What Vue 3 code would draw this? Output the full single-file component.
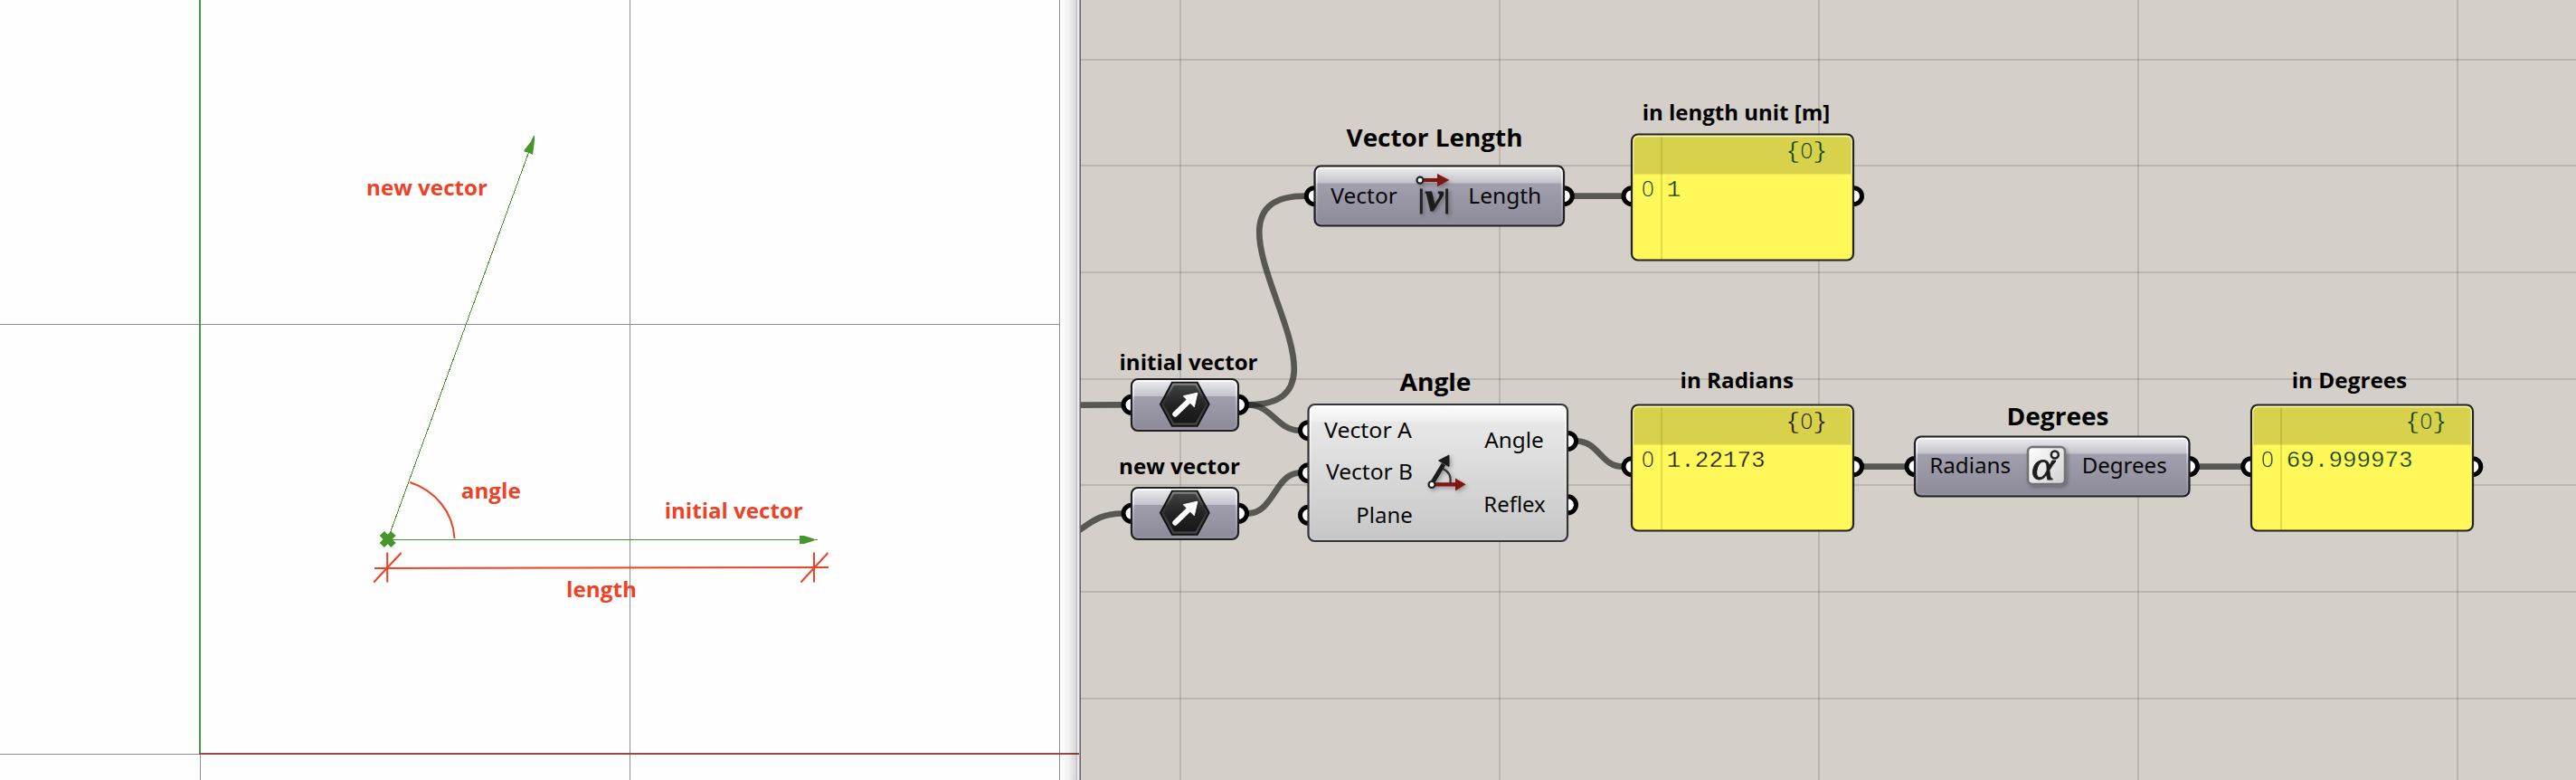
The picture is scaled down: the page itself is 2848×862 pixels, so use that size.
<script setup>
const gridX = [1304, 1657, 2010, 2363, 2716]
const gridY = [65, 182, 300, 418, 535, 653, 771]

const nodes = [
  { x: 1250, y: 418, w: 120, h: 59, kind: 'violet' },
  { x: 1250, y: 538, w: 120, h: 59, kind: 'violet' },
  { x: 1452.5, y: 182.5, w: 277.5, h: 68, kind: 'violet' },
  { x: 1445.5, y: 446, w: 288.5, h: 153, kind: 'silver' },
  { x: 2116, y: 481.5, w: 305.5, h: 68, kind: 'violet' },
]

const panels = [
  { x: 1803, y: 147.5, value: '1', tint: '#063a04' },
  { x: 1803, y: 446.5, value: '1.22173', tint: '#141400' },
  { x: 2488, y: 446.5, value: '69.999973', tint: '#063a04' },
]

const ports = [
  [1251, 447.3], [1369.5, 447.3], [1251, 567.3], [1369.5, 567.3],
  [1453.3, 216.7], [1729.3, 216.7],
  [1446.5, 475.7], [1446.5, 522.7], [1446.5, 569.3], [1733.5, 487.4], [1733.5, 557.8],
  [1804, 216.7], [2049.5, 216.7], [1804, 515.7], [2049.5, 515.7],
  [2117, 515.5], [2420.5, 515.5], [2488.7, 515.7], [2733.8, 515.7],
]

const wires = [
  'M1195 447.7 L1241 447.3',
  'M1180 594 C1203 582 1210 567.8 1241 567.5',
  'M1380 447.3 C1406 447.3 1412 475.7 1437 475.7',
  'M1380 567.3 C1408 567.3 1410 522.7 1437 522.7',
  'M1380 447.3 C1525 447.3 1298 216.7 1443 216.7',
  'M1740 216.7 L1794 216.7',
  'M1743 487.4 C1768 488 1770 515.7 1794 515.7',
  'M2060 515.7 L2107 515.7',
  'M2431 515.6 L2479 515.6',
]

const titles = [
  { t: 'Vector Length', x: 1488.5, y: 161.7, w: 195, s: 27 },
  { t: 'Angle', x: 1547.5, y: 431.7, w: 79, s: 27 },
  { t: 'Degrees', x: 2218.5, y: 470, w: 113, s: 27 },
  { t: 'in length unit [m]', x: 1815.7, y: 133.3, w: 207.5, s: 23.5 },
  { t: 'initial vector', x: 1237.5, y: 409.3, w: 153, s: 23.5 },
  { t: 'new vector', x: 1237, y: 524.3, w: 134, s: 23.5 },
  { t: 'in Radians', x: 1857.5, y: 429.3, w: 125.5, s: 23.5 },
  { t: 'in Degrees', x: 2533.7, y: 429.3, w: 127.5, s: 23.5 },
]

const notes = [
  { t: 'new vector', x: 405, y: 216.3, w: 134 },
  { t: 'angle', x: 509.8, y: 551.3, w: 66 },
  { t: 'initial vector', x: 734.7, y: 573.3, w: 153 },
  { t: 'length', x: 626, y: 659.5, w: 78 },
]

const labels = [
  { t: 'Vector', x: 1471.3, y: 224.7, w: 73.5 },
  { t: 'Length', x: 1623.3, y: 224.7, w: 81 },
  { t: 'Vector A', x: 1464, y: 483.7, w: 97 },
  { t: 'Vector B', x: 1466, y: 530, w: 96 },
  { t: 'Plane', x: 1499.3, y: 577.5, w: 62.5 },
  { t: 'Angle', x: 1641.2, y: 495.4, w: 65.5 },
  { t: 'Reflex', x: 1640.3, y: 565.7, w: 68.5 },
  { t: 'Radians', x: 2133.2, y: 523.3, w: 90 },
  { t: 'Degrees', x: 2301.7, y: 523.3, w: 94 },
]
</script>

<template>
  <svg class="scene" width="2848" height="862" viewBox="0 0 2848 862">
    <defs>
      <linearGradient id="edge" x1="0" x2="1" y1="0" y2="0">
        <stop offset="0" stop-color="#000" stop-opacity="0" />
        <stop offset=".5" stop-color="#000" stop-opacity=".05" />
        <stop offset="1" stop-color="#000" stop-opacity=".18" />
      </linearGradient>
      <linearGradient id="violet" x1="0" x2="0" y1="0" y2="1">
        <stop offset="0" stop-color="#a5a3b1" />
        <stop offset=".35" stop-color="#a09eac" />
        <stop offset="1" stop-color="#8c8a98" />
      </linearGradient>
      <linearGradient id="silver" x1="0" x2="0" y1="0" y2="1">
        <stop offset="0" stop-color="#ededed" />
        <stop offset="1" stop-color="#c6c6c6" />
      </linearGradient>
      <linearGradient id="violet-top" x1="0" x2="0" y1="0" y2="1">
        <stop offset="0" stop-color="#efeff2" />
        <stop offset="1" stop-color="#c3c2cb" />
      </linearGradient>
      <linearGradient id="silver-top" x1="0" x2="0" y1="0" y2="1">
        <stop offset="0" stop-color="#fdfdfd" />
        <stop offset="1" stop-color="#efefef" />
      </linearGradient>
      <linearGradient id="rim" x1="0" x2="0" y1="0" y2="1">
        <stop offset="0" stop-color="#fff" />
        <stop offset=".45" stop-color="#fff" stop-opacity=".3" />
        <stop offset="1" stop-color="#fff" stop-opacity=".08" />
      </linearGradient>
      <linearGradient id="hex" x1="0" x2="0" y1="0" y2="1">
        <stop offset="0" stop-color="#444" />
        <stop offset=".5" stop-color="#242424" />
        <stop offset="1" stop-color="#151515" />
      </linearGradient>
      <linearGradient id="hex-rim" x1="0" x2="0" y1="0" y2="1">
        <stop offset="0" stop-color="#858585" />
        <stop offset=".35" stop-color="#303030" />
        <stop offset="1" stop-color="#484848" />
      </linearGradient>
      <linearGradient id="tile" x1="0" x2="1" y1="0" y2="1">
        <stop offset="0" stop-color="#fff" />
        <stop offset="1" stop-color="#d0d0d0" />
      </linearGradient>
      <filter id="drop" x="-30%" y="-30%" width="170%" height="170%">
        <feDropShadow dx="2" dy="2" stdDeviation="2" flood-opacity=".3" />
      </filter>
      <clipPath id="canvas"><rect x="1195" width="1653" height="862" /></clipPath>
    </defs>

    <!-- viewport -->
    <g shape-rendering="crispEdges">
      <rect width="1195" height="862" fill="#fefefe" />
      <g fill="#8b8f9a">
        <rect y="358" width="1172" height="1" />
        <rect x="696" width="1" height="862" />
        <rect x="1171" width="1" height="862" />
        <rect x="221" y="833" width="1" height="29" />
        <rect y="833" width="221" height="1" />
      </g>
      <rect x="220" width="2" height="833" fill="#489847" />
      <rect x="1190" width="1" height="862" fill="#e4e4e4" />
      <rect x="1191" width="2" height="862" fill="#ebebeb" />
      <rect x="220" y="832" width="973" height="2" fill="#984847" />
      <rect x="1172" width="19" height="862" fill="url(#edge)" />
    </g>

    <g class="vectors">
      <path d="M430 596.5 H904" shape-rendering="crispEdges" />
      <path d="M430 592.500 L585 167" shape-rendering="crispEdges" />
      <path class="solid" d="M884 592 h5 l11 3.500 v2 l-11 3.500 h-5z" />
      <path class="solid" d="M590 150 h1 v5.500 l-2 15.500 -4 -2 -5.500 -1.500 v-1.500 l7 -9z" />
      <path class="cross" d="M422.300 589.500 L435 602.500 M435 589.500 L422.300 602.500" />
    </g>

    <g class="measure">
      <path d="M453.200 533 C481 542 501 566 502.500 595" />
      <path d="M414 628 L916 627" />
      <path d="M428.200 610.500 V643.500 M900 610.500 V643.500" />
      <path d="M443.600 611 L413.200 643.500 M915.400 611 L885.400 643.500" />
    </g>
    <text
      v-for="n in notes" :key="n.t" class="note" :x="n.x" :y="n.y"
      :textLength="n.w" lengthAdjust="spacingAndGlyphs"
    >{{ n.t }}</text>

    <!-- node canvas -->
    <g shape-rendering="crispEdges">
      <rect x="1195" width="1653" height="862" fill="#d4cfc8" />
      <g class="grid">
        <rect v-for="x in gridX" :key="'x' + x" :x="x" y="0" width="2" height="862" />
        <rect v-for="y in gridY" :key="'y' + y" x="1195" :y="y" width="1653" height="2" />
      </g>
      <rect x="1193" width="1" height="862" fill="#a0a0a0" />
      <rect x="1194" width="1" height="862" fill="#65656a" />
    </g>
    <g clip-path="url(#canvas)">
      <path v-for="w in wires" :key="w" :d="w" class="wire" />
    </g>
    <circle v-for="(p, i) in ports" :key="i" class="port" :cx="p[0]" :cy="p[1]" r="9" />

    <g v-for="(n, i) in nodes" :key="'n' + i">
      <rect :x="n.x + 1" :y="n.y + 1" :width="n.w - 2" :height="n.h - 2" rx="7" :fill="`url(#${n.kind})`" />
      <path
        :d="`M${n.x + 1} ${n.y + 20} v-12 a7 7 0 0 1 7 -7 h${n.w - 16} a7 7 0 0 1 7 7 v12z`"
        :fill="`url(#${n.kind}-top)`"
      />
      <rect
        :x="n.x + 3" :y="n.y + 3" :width="n.w - 6" :height="n.h - 6" rx="5"
        fill="none" stroke="url(#rim)" stroke-width="2"
      />
      <rect
        :x="n.x + 1" :y="n.y + 1" :width="n.w - 2" :height="n.h - 2" rx="7"
        fill="none" :stroke="n.kind === 'silver' ? '#343436' : '#1f1f23'" stroke-width="2.200"
      />
    </g>

    <g v-for="p in panels" :key="p.x + p.value" :transform="`translate(${p.x} ${p.y})`">
      <rect x="1" y="1" width="245" height="139" rx="7" fill="#fff85a" />
      <path d="M3 45 V8 a5 5 0 0 1 5-5 h231 a5 5 0 0 1 5 5 v37z" fill="#d8d14c" />
      <path d="M2.500 45 V8 a5.500 5.500 0 0 1 5.500-5 h231 a5.500 5.500 0 0 1 5.500 5 v37" fill="none" stroke="#ffffc8" stroke-width="1.500" />
      <rect x="33" y="4" width="2" height="135" fill="#807800" fill-opacity=".22" />
      <rect x="1" y="1" width="245" height="139" rx="7" fill="none" stroke="#222220" stroke-width="2.200" />
      <g class="data" :fill="p.tint">
        <g stroke="#d8d14c">
          <text x="171.500" y="27.800">{<tspan class="zero" x="187.500" dy="0">0</tspan><tspan x="201.500">}</tspan></text>
        </g>
        <g stroke="#fff85a">
          <text class="zero" x="12" y="69.200">0</text>
          <text x="39.800" y="69.200">{{ p.value }}</text>
        </g>
      </g>
    </g>

    <text
      v-for="t in titles" :key="t.t" class="title" :x="t.x" :y="t.y" :font-size="t.s"
      :textLength="t.w" lengthAdjust="spacingAndGlyphs"
    >{{ t.t }}</text>
    <text
      v-for="l in labels" :key="l.t + l.x" class="label" :x="l.x" :y="l.y"
      :textLength="l.w" lengthAdjust="spacingAndGlyphs"
    >{{ l.t }}</text>

    <!-- relay icons -->
    <g v-for="y in [446.7, 566.7]" :key="y" :transform="`translate(1309.800 ${y})`">
      <path d="M-28 0 L-14.500 -25 H14.500 L28 0 L14.500 25 H-14.500z" fill="#111" />
      <path d="M-24.500 0 L-12.500 -22 H12.500 L24.500 0 L12.500 22 H-12.500z" fill="url(#hex)" stroke="url(#hex-rim)" stroke-width="2.200" />
      <path d="M-10.500 11 L5 -4" stroke="#fff" stroke-width="6" stroke-linecap="round" />
      <path d="M14 -12.500 L10.500 3 L-1.500 -9z" fill="#fff" stroke="#fff" stroke-linejoin="round" />
    </g>

    <!-- vector length icon -->
    <g filter="url(#drop)">
      <path d="M1574 197 H1589 V192 L1602.300 199 L1589 206.300 V201 H1574z" fill="#7f140e" />
      <circle cx="1570" cy="199.200" r="3.500" fill="#fff" stroke="#222" stroke-width="2.200" />
      <path d="M1571.300 208.500 V236.500 M1599.600 208.500 V236.500" stroke="#222" stroke-width="3" />
      <text class="glyph" x="1575.500" y="233" font-size="46" font-weight="bold" textLength="20" lengthAdjust="spacingAndGlyphs">v</text>
    </g>

    <!-- angle icon -->
    <g filter="url(#drop)">
      <path d="M1595 518 Q1605 522 1603.500 534" fill="none" stroke="#333" stroke-width="2.200" />
      <path d="M1584.500 532 L1596 513" stroke="#1a1a1a" stroke-width="5" />
      <path d="M1602 503 L1602 515.500 L1590.500 509z" fill="#1a1a1a" stroke="#1a1a1a" stroke-linejoin="round" />
      <path d="M1587 533.300 H1609 V528.500 L1620.500 535.300 L1609 542.500 V537.500 H1587z" fill="#7f140e" />
      <circle cx="1583" cy="535.500" r="3.500" fill="#fff" stroke="#222" stroke-width="2.200" />
    </g>

    <!-- degrees icon -->
    <g filter="url(#drop)">
      <rect x="2242" y="494" width="41" height="41" rx="5" fill="url(#tile)" stroke="#727272" stroke-width="2.500" />
      <text class="glyph" x="2246" y="529.800" font-size="46" textLength="26" lengthAdjust="spacingAndGlyphs">α</text>
      <circle cx="2271.800" cy="502.500" r="4" fill="none" stroke="#222" stroke-width="2.600" />
    </g>
  </svg>
</template>

<style>
body { margin: 0; background: #fefefe; }
</style>

<style scoped>
.scene { display: block; overflow: hidden; }
.vectors path { fill: none; stroke: #45962b; stroke-width: 1; }
.vectors .solid { fill: #45962b; stroke: none; }
.vectors .cross { stroke-width: 7.5; }
.measure path { fill: none; stroke: #ec4327; stroke-width: 2; }
.note { font: bold 23.5px "Open Sans", "Noto Sans", sans-serif; fill: #ec4327; }
.title { font-family: "Open Sans", "Noto Sans", sans-serif; font-weight: bold; fill: #000; }
.label { font: 24px "Noto Sans", "Open Sans", sans-serif; fill: #080808; }
.grid rect { fill: #000; fill-opacity: .12; }
.wire { fill: none; stroke: #23231f; stroke-opacity: .7; stroke-width: 6.7; }
.port { fill: #fff; stroke: #000; stroke-width: 5; }
.data { font: 25.9px "Liberation Mono", monospace; stroke-width: .35; }
.data .zero { font: 300 24px "Open Sans", "Noto Sans", sans-serif; stroke-width: 0; }
.glyph { font-family: "Liberation Serif", serif; font-style: italic; fill: #1b1b1b; stroke: #1b1b1b; stroke-width: .8; }
</style>
